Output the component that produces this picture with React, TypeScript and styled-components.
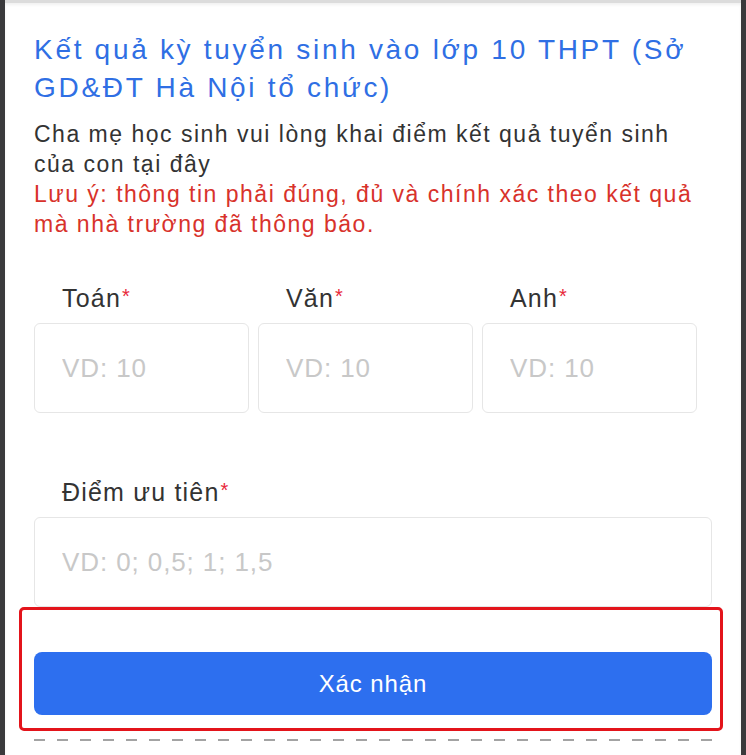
import React from "react";
import styled, { createGlobalStyle } from "styled-components";

const GlobalStyle = createGlobalStyle`
  html, body {
    margin: 0;
    padding: 0;
    background: #3a3a3c;
  }
  body {
    font-family: "Liberation Sans", Arial, sans-serif;
  }
`;

const Frame = styled.div`
  width: 736px;
  height: 755px;
  margin-left: 5px;
  background: #fff;
  overflow: hidden;
  border-top: 3px solid #dcdcdc;
  box-sizing: border-box;
  box-shadow: inset 0 2px 3px rgba(0, 0, 0, 0.06);
`;

const Content = styled.div`
  padding: 28px 29px 0 29px;
  display: flex;
  flex-direction: column;
`;

const Title = styled.h1`
  margin: 0;
  font-size: 28px;
  line-height: 38px;
  letter-spacing: 2.7px;
  font-weight: 400;
  color: #2f6fe4;
`;

const Intro = styled.p`
  margin: 12px 0 0;
  font-size: 23px;
  line-height: 30px;
  letter-spacing: 1.5px;
  color: #333;
`;

const Note = styled(Intro)`
  margin: 0;
  color: #d8322b;
`;

const ScoreRow = styled.div`
  display: grid;
  grid-template-columns: repeat(3, 215px);
  column-gap: 9px;
  margin-top: 42px;
`;

const Field = styled.div`
  display: flex;
  flex-direction: column;
`;

const Label = styled.label`
  padding-left: 28px;
  font-size: 25px;
  line-height: 30px;
  letter-spacing: 1.2px;
  color: #333;
  margin-bottom: 10px;
`;

const Star = styled.span`
  color: #e8283a;
  font-size: 20px;
  vertical-align: 4px;
  margin-left: 1px;
`;

const Input = styled.input<{ $wide?: boolean }>`
  box-sizing: border-box;
  width: ${(p) => (p.$wide ? "678px" : "215px")};
  height: 90px;
  border: 1.5px solid #e6e6e6;
  border-radius: 6px;
  padding: 0 0 0 27px;
  font-family: inherit;
  font-size: 26px;
  letter-spacing: 0.9px;
  color: #333;
  outline: none;
  &::placeholder {
    color: #c8c8c8;
  }
`;

const PriorityField = styled(Field)`
  margin-top: 62px;
`;

const Highlight = styled.div`
  margin: 0 0 0 -15px;
  width: 704px;
  box-sizing: border-box;
  border: 3px solid #e3141b;
  border-radius: 5px;
  padding: 42px 0 13px 12px;
`;

const SubmitButton = styled.button`
  width: 678px;
  height: 63px;
  border: none;
  border-radius: 8px;
  background: #2d6fef;
  color: #fff;
  font-family: inherit;
  font-size: 24px;
  letter-spacing: 0.9px;
  cursor: pointer;
`;

const Dashed = styled.div`
  margin-top: 8px;
  width: 678px;
  height: 2px;
  background: repeating-linear-gradient(
    90deg,
    #a3a3a3 0 11px,
    transparent 11px 23px
  );
`;

const subjects = ["Toán", "Văn", "Anh"];

export default function App() {
  return (
    <>
      <GlobalStyle />
      <Frame>
        <Content>
          <Title>Kết quả kỳ tuyển sinh vào lớp 10 THPT (Sở GD&amp;ĐT Hà Nội tổ chức)</Title>
          <Intro>Cha mẹ học sinh vui lòng khai điểm kết quả tuyển sinh của con tại đây</Intro>
          <Note>Lưu ý: thông tin phải đúng, đủ và chính xác theo kết quả mà nhà trường đã thông báo.</Note>
          <ScoreRow>
            {subjects.map((s) => (
              <Field key={s}>
                <Label>
                  {s}
                  <Star>*</Star>
                </Label>
                <Input placeholder="VD: 10" />
              </Field>
            ))}
          </ScoreRow>
          <PriorityField>
            <Label>
              Điểm ưu tiên<Star>*</Star>
            </Label>
            <Input $wide placeholder="VD: 0; 0,5; 1; 1,5" />
          </PriorityField>
          <Highlight>
            <SubmitButton>Xác nhận</SubmitButton>
          </Highlight>
          <Dashed />
        </Content>
      </Frame>
    </>
  );
}
